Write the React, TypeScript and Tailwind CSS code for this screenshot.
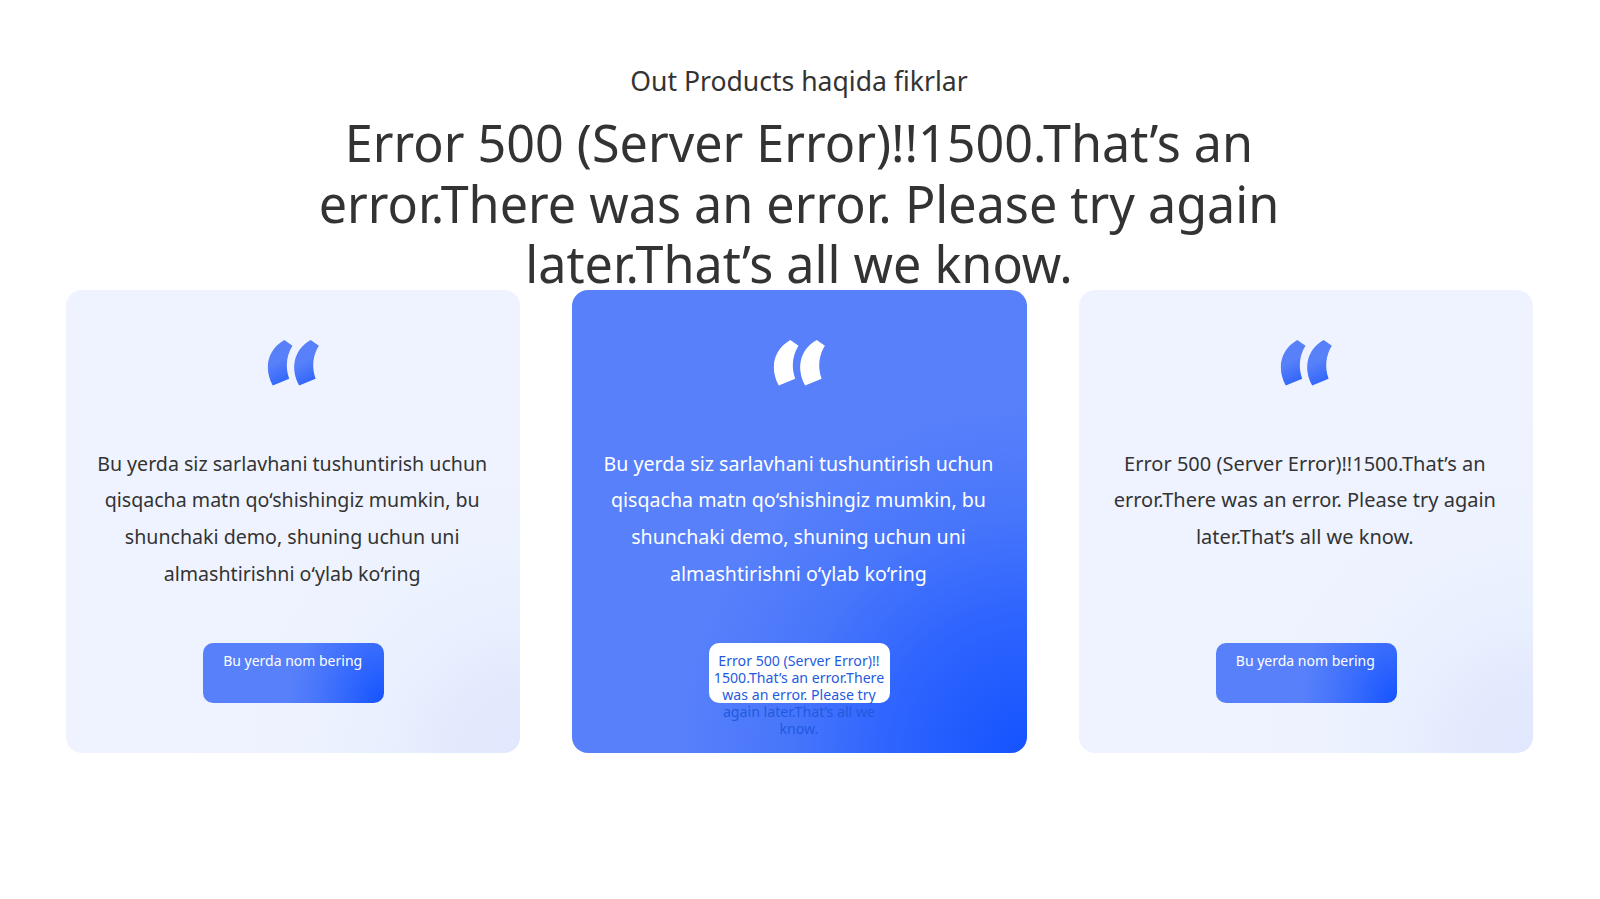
import React from 'react';

interface Testimonial {
  id: number;
  text: string;
  textClass: string;
  button: string;
  buttonClass: string;
  featured?: boolean;
}

const testimonials: Testimonial[] = [
  {
    id: 1,
    text: 'Bu yerda siz sarlavhani tushuntirish uchun\nqisqacha matn qo‘shishingiz mumkin, bu\nshunchaki demo, shuning uchun uni\nalmashtirishni o‘ylab ko‘ring',
    textClass: 'text-[19.6px]',
    button: 'Bu yerda nom bering',
    buttonClass: 'pr-[1px] text-[14px]',
  },
  {
    id: 2,
    text: 'Bu yerda siz sarlavhani tushuntirish uchun\nqisqacha matn qo‘shishingiz mumkin, bu\nshunchaki demo, shuning uchun uni\nalmashtirishni o‘ylab ko‘ring',
    textClass: 'text-[19.6px]',
    button: 'Error 500 (Server Error)!!\n1500.That’s an error.There\nwas an error. Please try\nagain later.That’s all we\nknow.',
    buttonClass: 'pr-[1px] text-[14.15px]',
    featured: true,
  },
  {
    id: 3,
    text: 'Error 500 (Server Error)!!1500.That’s an\nerror.There was an error. Please try again\nlater.That’s all we know.',
    textClass: 'text-[20px]',
    button: 'Bu yerda nom bering',
    buttonClass: 'ml-px pr-[2px] text-[14px]',
  },
];

const QuoteIcon: React.FC<{ id: string; white?: boolean }> = ({ id, white }) => (
  <svg width="52" height="46" viewBox="0 0 52 46" className="shrink-0" fill={white ? '#ffffff' : `url(#${id})`}>
    <defs>
      <linearGradient id={id} x1="0.35" y1="0" x2="0.65" y2="1">
        <stop offset="0.45" stopColor="#5780f9" />
        <stop offset="1" stopColor="#2c62fb" />
      </linearGradient>
    </defs>
    <path d="M17.3 0L25.5 5.7C19.5 15 18 27 22.2 38.7L5.8 45.5C-2.8 30 -1 10.5 17.3 0Z" />
    <path d="M43.7 0L51.9 5.7C45.9 15 44.4 27 48.6 38.7L32.2 45.5C23.6 30 25.4 10.5 43.7 0Z" />
  </svg>
);

const TestimonialCard: React.FC<{ item: Testimonial }> = ({ item }) => (
  <div
    className={`flex h-[463px] flex-col items-center rounded-2xl pt-[50px] ${
      item.featured
        ? 'bg-[radial-gradient(circle_at_bottom_right,#1453ff_0px,#3166fe_150px,#4876fb_240px,#5780fa_345px)]'
        : 'bg-[radial-gradient(circle_at_bottom_right,#e1e7fd_0px,#e4eafd_75px,#e8effe_130px,#ecf2fe_200px,#eff3ff_330px)]'
    }`}
  >
    <QuoteIcon id={`quote-${item.id}`} white={item.featured} />

    <p
      className={`mt-[59.5px] h-[147.5px] whitespace-pre pr-[2px] text-center leading-[36.7px] ${item.textClass} ${
        item.featured ? 'text-white' : 'text-[#333333]'
      }`}
    >
      {item.text}
    </p>

    <button
      className={`mt-[50px] flex h-[60px] w-[181px] shrink-0 justify-center rounded-[10px] pt-[9px] text-center leading-[17.1px] whitespace-pre ${item.buttonClass} ${
        item.featured
          ? 'bg-white text-[#1f5adf]'
          : 'bg-[radial-gradient(ellipse_95px_120px_at_bottom_right,#1453ff_0%,#3368fd_40%,#4876fb_70%,#5780fa_100%)] text-white'
      }`}
    >
      {item.button}
    </button>
  </div>
);

export default function App() {
  return (
    <main className="h-[899px] w-full overflow-hidden bg-white px-[66px] pt-[64px] font-['Noto_Sans',sans-serif] text-[#333333]">
      <header className="flex h-[226px] flex-col items-center pr-[2px] text-center">
        <h3 className="text-[26.55px] leading-[34px]">Out Products haqida fikrlar</h3>
        <h1 className="mt-[15px] text-[50.27px] leading-[60.5px] whitespace-pre">
          {'Error 500 (Server Error)!!1500.That’s an\nerror.There was an error. Please try again\nlater.That’s all we know.'}
        </h1>
      </header>

      <section className="grid w-[1467px] grid-cols-3 gap-x-[52px]">
        {testimonials.map((item) => (
          <TestimonialCard key={item.id} item={item} />
        ))}
      </section>
    </main>
  );
}
